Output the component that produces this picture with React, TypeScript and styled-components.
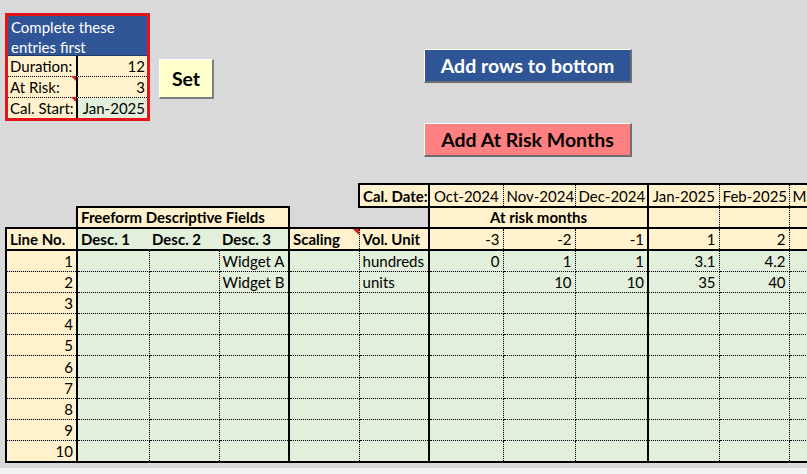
import styled, { createGlobalStyle, css } from "styled-components";

const GlobalStyle = createGlobalStyle`
  html, body {
    margin: 0;
    padding: 0;
    background: #d9d9d9;
  }
  body {
    font-family: Lato, "Open Sans", sans-serif;
    color: #000;
  }
`;

const YELLOW = "#fff2cc";
const GREEN = "#e2efda";

type Edge = "thick" | "dot" | undefined;
type Fill = "y" | "g" | undefined;

const edge = (e: Edge) =>
  e === "thick" ? "2px solid #000" : e === "dot" ? "1px dotted #000" : "none";

// column widths in px, A..L
const colWidths = [71, 72, 70, 70, 70, 70, 74, 72, 73, 71, 70, 70];
// the border on the right of each column in the body
const rightEdges: Edge[] = ["thick", "dot", "dot", "thick", "dot", "thick", "dot", "dot", "thick", "dot", "dot", "dot"];

const months = ["Oct-2024", "Nov-2024", "Dec-2024", "Jan-2025", "Feb-2025", "Mar-2025"];
const offsets = ["-3", "-2", "-1", "1", "2", ""];

type Line = { desc3?: string; unit?: string; vals: string[] };
const lines: Line[] = [
  { desc3: "Widget A", unit: "hundreds", vals: ["0", "1", "1", "3.1", "4.2", ""] },
  { desc3: "Widget B", unit: "units", vals: ["", "10", "10", "35", "40", ""] },
];

const App = () => {
  const rows = Array.from({ length: 10 }, (_, i) => lines[i] ?? { vals: ["", "", "", "", "", ""] });

  return (
    <>
      <GlobalStyle />
      <Page>
        <TopArea>
          <EntryBox>
            <EntryHeader>Complete these entries first</EntryHeader>
            <EntryRow>
              <EntryLabel>Duration:</EntryLabel>
              <EntryValue>12</EntryValue>
            </EntryRow>
            <EntryRow>
              <EntryLabel $flag>At Risk:</EntryLabel>
              <EntryValue>3</EntryValue>
            </EntryRow>
            <EntryRow $last>
              <EntryLabel $flag>Cal. Start:</EntryLabel>
              <EntryValue $green>Jan-2025</EntryValue>
            </EntryRow>
          </EntryBox>
          <SetButton>Set</SetButton>
          <ActionColumn>
            <ActionButton $variant="blue">Add rows to bottom</ActionButton>
            <ActionButton $variant="red">Add At Risk Months</ActionButton>
          </ActionColumn>
        </TopArea>

        <Sheet>
          <colgroup>
            {colWidths.map((w, i) => (
              <col key={i} style={{ width: w }} />
            ))}
          </colgroup>
          <tbody>
            <SheetRow $h={23}>
              <Cell colSpan={5} />
              <Cell $bg="y" $bold $t="thick" $b="thick" $l="thick" $r="thick">
                Cal. Date:
              </Cell>
              {months.map((m, i) => (
                <Cell key={m} $bg="y" $align="center" $t="thick" $b="thick" $r={rightEdges[6 + i]}>
                  {m}
                </Cell>
              ))}
            </SheetRow>

            <SheetRow $h={21}>
              <Cell />
              <Cell colSpan={3} $bg="y" $bold $t="thick" $b="thick" $l="thick" $r="thick">
                Freeform Descriptive Fields
              </Cell>
              <Cell colSpan={2} />
              <Cell colSpan={3} $bg="y" $bold $align="center" $t="thick" $b="thick" $l="thick" $r="thick">
                At risk months
              </Cell>
              {[9, 10, 11].map((c) => (
                <Cell key={c} $bg="y" $t="thick" $b="thick" $r={rightEdges[c]} />
              ))}
            </SheetRow>

            <SheetRow $h={22}>
              <Cell $bg="y" $bold $t="thick" $b="thick" $l="thick" $r="thick">
                Line No.
              </Cell>
              <Cell $bg="g" $bold $t="thick" $b="thick">Desc. 1</Cell>
              <Cell $bg="g" $bold $t="thick" $b="thick">Desc. 2</Cell>
              <Cell $bg="g" $bold $t="thick" $b="thick" $r="thick">Desc. 3</Cell>
              <Cell $bg="y" $bold $flag $t="thick" $b="thick" $r="dot">Scaling</Cell>
              <Cell $bg="y" $bold $t="thick" $b="thick" $r="thick">Vol. Unit</Cell>
              {offsets.map((o, i) => (
                <Cell key={i} $bg="y" $align="right" $t="thick" $b="thick" $r={rightEdges[6 + i]}>
                  {o}
                </Cell>
              ))}
            </SheetRow>

            {rows.map((row, r) => {
              const b: Edge = r === rows.length - 1 ? "thick" : "dot";
              return (
                <SheetRow key={r} $h={21.2}>
                  <Cell $bg="y" $align="right" $l="thick" $r="thick" $b={b}>
                    {r + 1}
                  </Cell>
                  <Cell $bg="g" $r="dot" $b={b} />
                  <Cell $bg="g" $r="dot" $b={b} />
                  <Cell $bg="g" $r="thick" $b={b}>{row.desc3}</Cell>
                  <Cell $bg="g" $r="dot" $b={b} />
                  <Cell $bg="g" $r="thick" $b={b}>{row.unit}</Cell>
                  {row.vals.map((v, i) => (
                    <Cell key={i} $bg="g" $align="right" $r={rightEdges[6 + i]} $b={b}>
                      {v}
                    </Cell>
                  ))}
                </SheetRow>
              );
            })}
          </tbody>
        </Sheet>
        <BelowSheet />
      </Page>
    </>
  );
};

export default App;

const Page = styled.div`
  position: relative;
  width: 807px;
  height: 474px;
  overflow: hidden;
  background: #d9d9d9;
  font-size: 15px;
`;

const TopArea = styled.div`
  display: flex;
  align-items: flex-start;
  height: 183px;
  padding-left: 5px;
  box-sizing: border-box;
`;

const EntryBox = styled.div`
  margin-top: 13px;
  width: 145px;
  height: 108px;
  box-sizing: border-box;
  border: 3px solid #e3141c;
  display: flex;
  flex-direction: column;
  background: ${YELLOW};
`;

const EntryHeader = styled.div`
  height: 40px;
  box-sizing: border-box;
  padding: 1px 3px 0;
  background: #2f5597;
  color: #fff;
  line-height: 20px;
  border-bottom: 1px solid #1f3864;
`;

const EntryRow = styled.div<{ $last?: boolean }>`
  display: grid;
  grid-template-columns: 68px 1fr;
  height: ${(p) => (p.$last ? "20px" : "21px")};
  box-sizing: border-box;
  line-height: 20px;
  border-bottom: ${(p) => (p.$last ? "none" : "1px dotted #000")};
`;

const EntryLabel = styled.div<{ $flag?: boolean }>`
  position: relative;
  padding-left: 2px;
  background: ${YELLOW};
  white-space: nowrap;

  ${(p) =>
    p.$flag &&
    css`
      &::after {
        content: "";
        position: absolute;
        top: -1px;
        right: 0;
        border-top: 5px solid #e3141c;
        border-left: 5px solid transparent;
      }
    `}
`;

const EntryValue = styled.div<{ $green?: boolean }>`
  border-left: 2px solid #000;
  padding-right: 2px;
  text-align: right;
  background: ${(p) => (p.$green ? GREEN : YELLOW)};
`;

const SetButton = styled.div`
  margin-left: 9px;
  margin-top: 59px;
  width: 55px;
  height: 40px;
  box-sizing: border-box;
  background: #ffffcc;
  border-top: 1px solid #fff;
  border-left: 1px solid #fff;
  border-right: 2px solid #7f7f7f;
  border-bottom: 2px solid #7f7f7f;
  display: flex;
  align-items: center;
  justify-content: center;
  font-weight: 700;
  font-size: 19.5px;
`;

const ActionColumn = styled.div`
  margin-left: 210px;
  margin-top: 49px;
  display: flex;
  flex-direction: column;
  gap: 40px;
`;

const ActionButton = styled.div<{ $variant: "blue" | "red" }>`
  width: 208px;
  height: 34px;
  box-sizing: border-box;
  border-top: 1px solid #fff;
  border-left: 1px solid #fff;
  border-right: 2px solid #6f6f6f;
  border-bottom: 2px solid #6f6f6f;
  display: flex;
  align-items: center;
  justify-content: center;
  font-weight: 700;
  font-size: 19.5px;
  background: ${(p) => (p.$variant === "blue" ? "#2f5597" : "#ff8080")};
  color: ${(p) => (p.$variant === "blue" ? "#fff" : "#000")};
`;

const Sheet = styled.table`
  margin-left: 5px;
  border-collapse: collapse;
  table-layout: fixed;
  width: ${colWidths.reduce((a, b) => a + b, 0)}px;
`;

const SheetRow = styled.tr<{ $h: number }>`
  height: ${(p) => p.$h}px;
`;

const Cell = styled.td<{
  $bg?: Fill;
  $bold?: boolean;
  $align?: "left" | "right" | "center";
  $flag?: boolean;
  $t?: Edge;
  $b?: Edge;
  $l?: Edge;
  $r?: Edge;
}>`
  position: relative;
  padding: 0 3px;
  vertical-align: bottom;
  line-height: 19px;
  white-space: nowrap;
  overflow: hidden;
  background: ${(p) => (p.$bg === "y" ? YELLOW : p.$bg === "g" ? GREEN : "transparent")};
  font-weight: ${(p) => (p.$bold ? 700 : 400)};
  text-align: ${(p) => p.$align ?? "left"};
  border-top: ${(p) => edge(p.$t)};
  border-bottom: ${(p) => edge(p.$b)};
  border-left: ${(p) => edge(p.$l)};
  border-right: ${(p) => edge(p.$r)};

  ${(p) =>
    p.$flag &&
    css`
      &::after {
        content: "";
        position: absolute;
        top: 0;
        right: 0;
        border-top: 6px solid #e3141c;
        border-left: 6px solid transparent;
      }
    `}
`;

const BelowSheet = styled.div`
  position: absolute;
  left: 0;
  right: 0;
  bottom: 0;
  height: 6px;
  background: #f2f2f2;
`;
